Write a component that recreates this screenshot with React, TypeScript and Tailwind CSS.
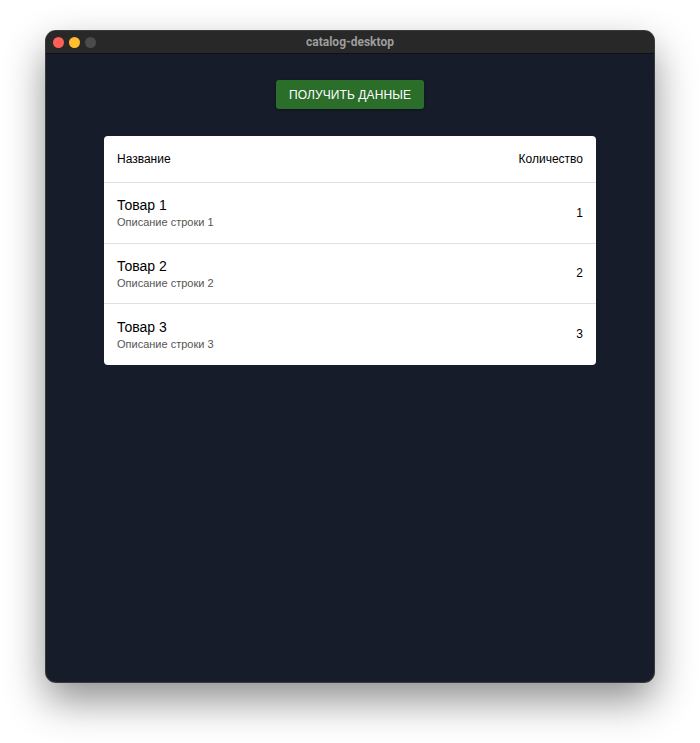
import React from "react";

const rows = [
  { name: "Товар 1", desc: "Описание строки 1", qty: 1 },
  { name: "Товар 2", desc: "Описание строки 2", qty: 2 },
  { name: "Товар 3", desc: "Описание строки 3", qty: 3 },
];

export default function App() {
  return (
    <div className="w-[700px] h-[743px] bg-white pt-[31px] pl-[46px]" style={{ fontFamily: '"Liberation Sans", Arial, sans-serif' }}>
      <div className="w-[608px] h-[651px] rounded-[10px] overflow-hidden bg-[#161c2a] shadow-[0_18px_40px_rgba(0,0,0,0.45)] ring-1 ring-[#3a3a3a] flex flex-col">
        <div className="h-[23px] bg-[#282828] border-b border-[#111] flex items-center relative shrink-0">
          <div className="flex gap-[5px] pl-[7px]">
            <span className="w-[11px] h-[11px] rounded-full bg-[#fe5f57]" />
            <span className="w-[11px] h-[11px] rounded-full bg-[#febc2e]" />
            <span className="w-[11px] h-[11px] rounded-full bg-[#4b4b4b]" />
          </div>
          <div className="absolute inset-0 flex items-center justify-center text-[12px] font-bold text-[#9d9d9d]" style={{ fontFamily: 'Roboto, "Liberation Sans", sans-serif' }}>
            catalog-desktop
          </div>
        </div>
        <div className="flex flex-col items-center pt-[26px]">
          <button className="h-[29px] w-[148px] rounded-[3px] bg-[#2a6e2a] text-white text-[12px] tracking-[0.1px] shadow-[0_1px_3px_rgba(0,0,0,0.4)]">
            ПОЛУЧИТЬ ДАННЫЕ
          </button>
          <div className="mt-[27px] w-[492px] bg-white rounded-[4px] overflow-hidden">
            <div className="h-[47px] flex items-center justify-between px-[13px] border-b border-[#e0e0e0] text-[12px] text-black">
              <span>Название</span>
              <span>Количество</span>
            </div>
            {rows.map((r, i) => (
              <div key={i} className={`h-[60.5px] flex items-center justify-between px-[13px] ${i < rows.length - 1 ? "border-b border-[#e0e0e0]" : ""}`}>
                <div className="flex flex-col">
                  <span className="text-[14px] text-black leading-[18px]">{r.name}</span>
                  <span className="text-[11px] text-[#555] leading-[14px] mt-[1px]">{r.desc}</span>
                </div>
                <span className="text-[12px] text-black">{r.qty}</span>
              </div>
            ))}
          </div>
        </div>
      </div>
    </div>
  );
}
